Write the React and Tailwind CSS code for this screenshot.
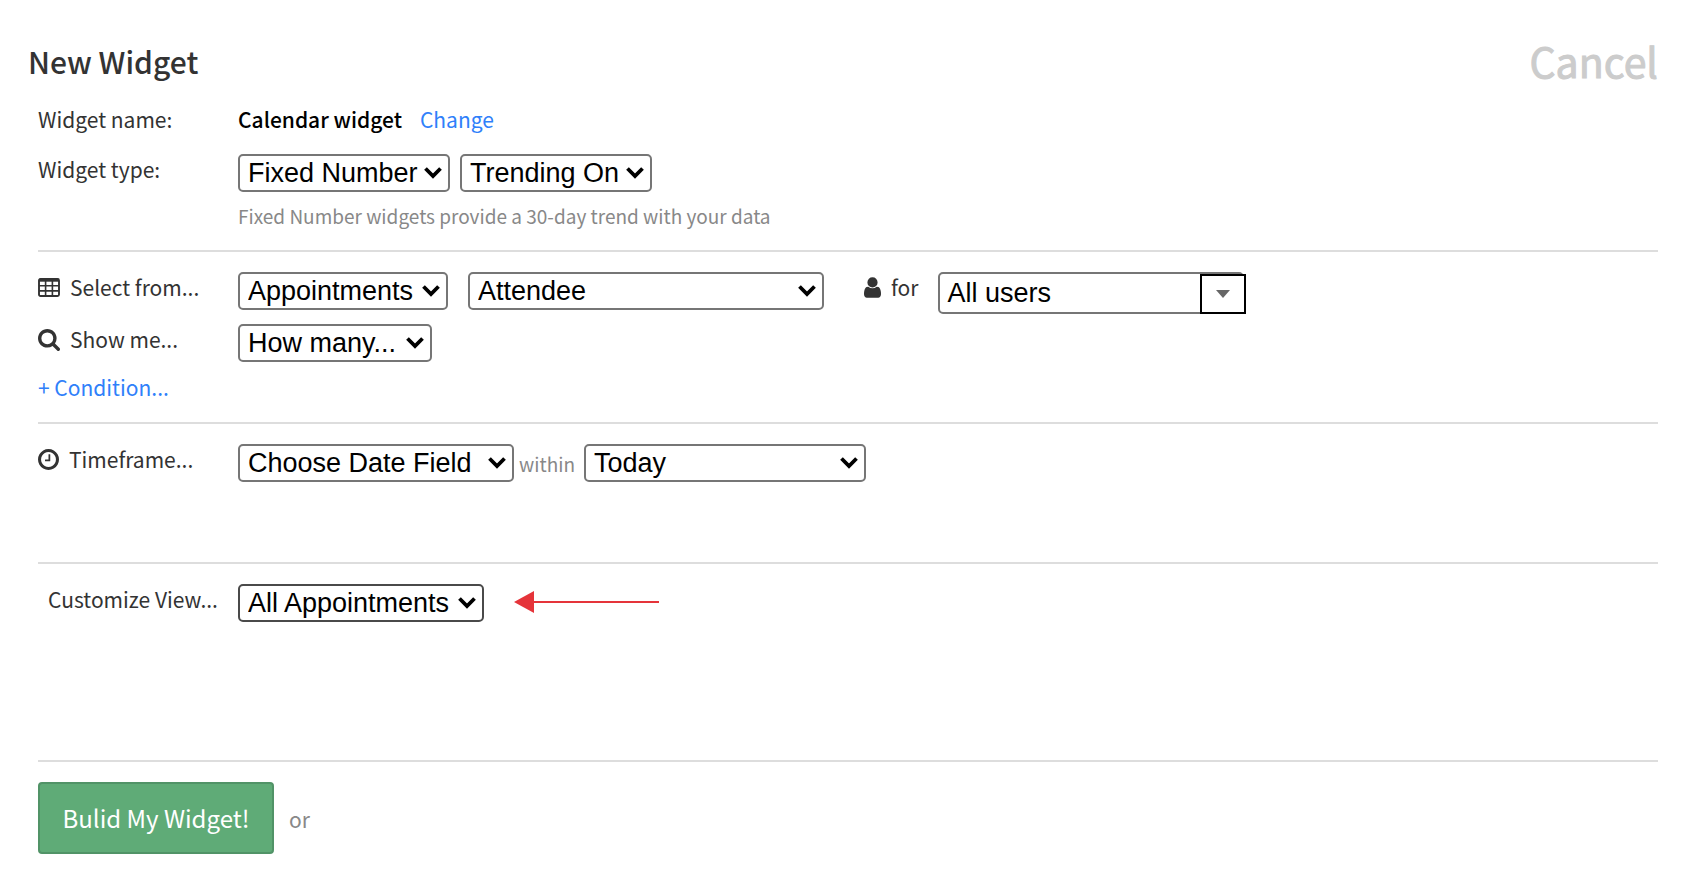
import React from 'react';

const TableIcon = () => (
    <svg viewBox="0 0 22 19" className="w-[22px] h-[19px] shrink-0" fill="none" stroke="currentColor" aria-hidden="true">
        <rect x="1" y="1" width="20" height="17" rx="1.5" strokeWidth="1.9" />
        <path d="M1 2.2h20" strokeWidth="3" />
        <path d="M1 7.8h20M1 12.9h20M7.6 2v16M14.4 2v16" strokeWidth="1.6" />
    </svg>
);

const SearchIcon = () => (
    <svg viewBox="64 128 1664 1664" className="mt-0.5 w-[22px] h-[22px] shrink-0" fill="currentColor" aria-hidden="true">
        <path d="M1216 832q0-185-131.5-316.5t-316.5-131.5-316.5 131.5-131.5 316.5 131.5 316.5 316.5 131.5 316.5-131.5 131.5-316.5zm512 832q0 52-38 90t-90 38q-54 0-90-38l-343-342q-179 124-399 124-143 0-273.5-55.5t-225-150-150-225-55.5-273.5 55.5-273.5 150-225 225-150 273.5-55.5 273.5 55.5 225 150 150 225 55.5 273.5q0 220-124 399l343 343q37 37 37 90z" />
    </svg>
);

const ClockIcon = () => (
    <svg viewBox="128 128 1536 1536" className="w-[21px] h-[21px] shrink-0" fill="currentColor" aria-hidden="true">
        <path d="M1024 544v448q0 14-9 23t-23 9h-320q-14 0-23-9t-9-23v-64q0-14 9-23t23-9h224v-352q0-14 9-23t23-9h64q14 0 23 9t9 23zm416 352q0-148-73-273t-198-198-273-73-273 73-198 198-73 273 73 273 198 198 273 73 273-73 198-198 73-273zm224 0q0 209-103 385.5t-279.5 279.5-385.5 103-385.5-103-279.5-279.5-103-385.5 103-385.5 279.5-279.5 385.5-103 385.5 103 279.5 279.5 103 385.5z" />
    </svg>
);

const UserIcon = () => (
    <svg viewBox="256 128 1280 1536" className="w-[17px] h-[21px] shrink-0" fill="currentColor" aria-hidden="true">
        <path d="M1536 1399q0 109-62.5 187t-150.5 78h-854q-88 0-150.5-78t-62.5-187q0-85 8.5-160.5t31.5-152 58.5-131 94-89 134.5-34.5q131 128 313 128t313-128q76 0 134.5 34.5t94 89 58.5 131 31.5 152 8.5 160.5zm-256-887q0 159-112.5 271.5t-271.5 112.5-271.5-112.5-112.5-271.5 112.5-271.5 271.5-112.5 271.5 112.5 112.5 271.5z" />
    </svg>
);

const Select = ({ id, label, options, width, border = 'border-[#767676]' }) => (
    <div className={`relative h-[38px] ${width}`}>
        <select
            id={id}
            aria-label={label}
            className={`appearance-none w-full h-full pl-2 rounded-[5px] border-2 bg-white text-black text-[27px] leading-[34px] font-['Liberation_Sans',Arial,sans-serif] ${border}`}
        >
            {options.map(option => (
                <option key={option}>{option}</option>
            ))}
        </select>
        <svg viewBox="0 0 18 12" className="absolute right-2 top-[13px] w-[18px] h-3 pointer-events-none" fill="none" stroke="#000" strokeWidth="3.8" aria-hidden="true">
            <path d="M1.5 1.5L9 9l7.5-7.5" />
        </svg>
    </div>
);

const Row = ({ label, htmlFor, icon, indent = '', children }) => (
    <div className="flex items-start">
        <label htmlFor={htmlFor} className={`w-[200px] shrink-0 flex items-center gap-[10px] whitespace-nowrap ${indent}`}>
            {icon}
            {label}
        </label>
        {children}
    </div>
);

const App = () => {
    return (
        <main className="bg-white pt-7 pb-6 pr-9 pl-[38px] text-[21px] leading-[34px] text-[#333] font-['Noto_Sans_CJK_SC',sans-serif]">
            <header className="-ml-[10px] h-16 flex items-center justify-between">
                <h1 className="pt-0.5 text-[30px] leading-[48px] font-medium">New Widget</h1>
                <button type="button" className="text-[41px] leading-[64px] text-[#ccc] [-webkit-text-stroke:1px_#ccc]">Cancel</button>
            </header>

            <form onSubmit={e => e.preventDefault()}>
                <section className="pt-[10px] pb-[22px] border-b-2 border-[#ddd]">
                    <div className="flex">
                        <span className="w-[200px] shrink-0">Widget name:</span>
                        <span className="font-medium text-black">Calendar widget</span>
                        <a href="#change" className="ml-[18px] text-[#2f80fa]">Change</a>
                    </div>
                    <div className="mt-4">
                        <Row label="Widget type:" htmlFor="widget-type">
                            <div className="pt-0.5">
                                <div className="flex gap-[10px]">
                                    <Select id="widget-type" options={['Fixed Number', 'Chart', 'List']} width="w-[212px]" />
                                    <Select id="trending" label="Trending" options={['Trending On', 'Trending Off']} width="w-[192px]" />
                                </div>
                                <p className="mt-3 text-[19px] leading-6 text-[#888]">Fixed Number widgets provide a 30-day trend with your data</p>
                            </div>
                        </Row>
                    </div>
                </section>

                <section className="pt-[18px] pb-[18px] flex flex-col gap-2 border-b-2 border-[#ddd]">
                    <Row label="Select from..." htmlFor="source" icon={<TableIcon />}>
                        <div className="flex items-start">
                            <div className="pt-0.5 flex gap-5">
                                <Select id="source" options={['Appointments', 'Contacts', 'Tasks']} width="w-[210px]" />
                                <Select id="role" label="Role" options={['Attendee', 'Organizer']} width="w-[356px]" />
                            </div>
                            <label htmlFor="users" className="ml-10 mr-5 flex items-center gap-[10px]">
                                <UserIcon />
                                for
                            </label>
                            <div className="relative mt-0.5 w-[308px] h-[42px]">
                                <input
                                    id="users"
                                    type="text"
                                    defaultValue="All users"
                                    className="w-[306px] h-full pl-[7px] pr-12 rounded-[5px] border-2 border-[#767676] text-black text-[27px] leading-[38px] font-['Liberation_Sans',Arial,sans-serif]"
                                />
                                <button type="button" aria-label="Show users" className="absolute right-0 bottom-0 w-[46px] h-10 flex items-center justify-center border-2 border-black bg-white">
                                    <svg viewBox="0 0 14 8" className="w-[14px] h-2" fill="#666" aria-hidden="true">
                                        <path d="M0 0h14L7 8z" />
                                    </svg>
                                </button>
                            </div>
                        </div>
                    </Row>
                    <Row label="Show me..." htmlFor="measure" icon={<SearchIcon />}>
                        <div className="pt-0.5">
                            <Select id="measure" options={['How many...', 'Sum of...']} width="w-[194px]" />
                        </div>
                    </Row>
                    <div>
                        <a href="#condition" className="text-[#2f80fa]">+ Condition...</a>
                    </div>
                </section>

                <section className="pt-[18px] pb-20 border-b-2 border-[#ddd]">
                    <Row label="Timeframe..." htmlFor="date-field" icon={<ClockIcon />}>
                        <div className="pt-0.5 flex items-center">
                            <Select id="date-field" options={['Choose Date Field', 'Created', 'Updated']} width="w-[276px]" />
                            <label htmlFor="period" className="pt-0.5 ml-[5px] mr-[9px] text-[19px] text-[#888]">within</label>
                            <Select id="period" options={['Today', 'This week', 'This month']} width="w-[282px]" />
                        </div>
                    </Row>
                </section>

                <section className="pt-[18px] pb-[138px] border-b-2 border-[#ddd]">
                    <Row label="Customize View..." htmlFor="view" indent="pl-[10px]">
                        <div className="pt-0.5 flex items-center">
                            <Select id="view" options={['All Appointments', 'My Appointments']} width="w-[246px]" border="border-[#4a4a4a]" />
                            <svg viewBox="0 0 145 24" className="ml-[30px] w-[145px] h-6" fill="#e5343a" aria-hidden="true">
                                <path d="M0 11L20 0v22z" />
                                <path d="M18 10h127v2H18z" />
                            </svg>
                        </div>
                    </Row>
                </section>

                <footer className="pt-5 flex items-center">
                    <button type="submit" className="w-[236px] h-[72px] rounded border-2 border-[#519367] bg-[#5fab77] text-white text-[24px]">
                        Bulid My Widget!
                    </button>
                    <span className="pt-0.5 ml-[15px] text-[#888]">or</span>
                </footer>
            </form>
        </main>
    );
};

export default App;
